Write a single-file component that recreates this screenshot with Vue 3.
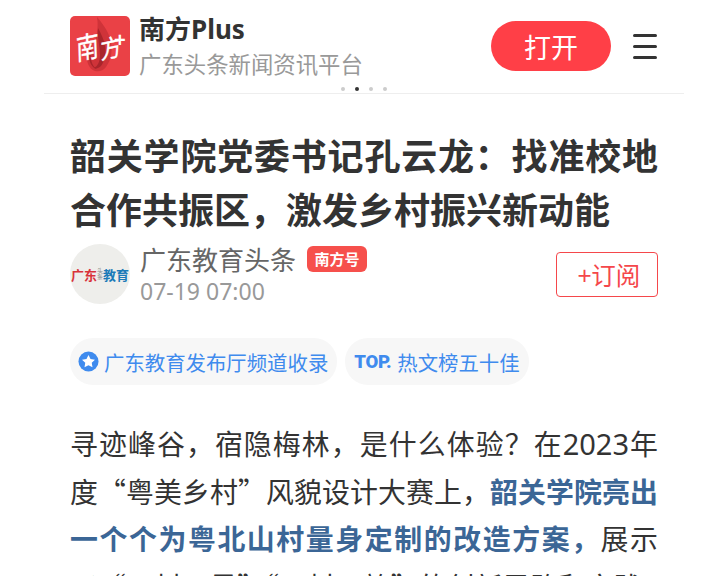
<template>
  <div class="page">
    <header class="topbar">
      <div class="brand">
        <div class="logo">
          <svg class="flame" viewBox="0 0 60 60" aria-hidden="true">
            <path d="M27 1c5 6 10 12 13 21 3 10 2 21-4 29-3 4-7 5-11 4-6-2-9-9-8-17 1-5 2-9 4-13 0 3 1 5 2 7 3-9 6-20 4-31z" fill="#cf3339" />
            <path d="M28 12c3 6 6 11 7 18 1 7 0 15-4 20-2 2-5 3-7 2 4-2 6-7 6-13 0-9-3-18-2-27z" fill="#a9252b" />
            <path d="M22 30c-2 5-2 12 0 17 1 3 3 5 5 6-5-1-8-7-8-13 0-4 1-7 3-10z" fill="#a9252b" />
          </svg>
          <span class="logo-nan">南</span>
          <span class="logo-fang">方</span>
          <span class="logo-plus">+</span>
        </div>
        <div class="brand-text">
          <div class="brand-name">南方Plus</div>
          <div class="brand-sub">广东头条新闻资讯平台</div>
        </div>
      </div>
      <div class="actions">
        <button class="open-btn">打开</button>
        <div class="menu"><i></i><i></i><i></i></div>
      </div>
      <div class="dots">
        <span v-for="n in 4" :key="n" class="dot" :class="{ on: n === 2 }"></span>
      </div>
    </header>

    <main class="article">
      <h1 class="title">韶关学院党委书记孔云龙：找准校地合作共振区，激发乡村振兴新动能</h1>

      <div class="author">
        <div class="avatar">
          <span class="av-red">广东</span><span class="av-mid">头条</span><span class="av-blue">教育</span>
        </div>
        <div class="author-info">
          <div class="author-line">
            <span class="author-name">广东教育头条</span>
            <span class="badge">南方号</span>
          </div>
          <div class="date">07-19 07:00</div>
        </div>
        <button class="follow">+订阅</button>
      </div>

      <div class="tags">
        <div class="tag">
          <svg class="star" viewBox="0 0 22 22" aria-hidden="true">
            <circle cx="11" cy="11" r="10.5" fill="#3f8bee" />
            <path d="M11 4.2l2.1 4.3 4.7.6-3.4 3.3.8 4.7-4.2-2.3-4.2 2.3.8-4.7-3.4-3.3 4.7-.6z" fill="#fff" />
          </svg>
          <span>广东教育发布厅频道收录</span>
        </div>
        <div class="tag tag-top">
          <b class="top">TOP.</b>
          <span>热文榜五十佳</span>
        </div>
      </div>

      <p class="body">寻迹峰谷，宿隐梅林，是什么体验？在<span class="num">2023</span>年度“粤美乡村”风貌设计大赛上，<strong>韶关学院亮出一个个为粤北山村量身定制的改造方案，</strong>展示了“一村一景”“一村一韵”的创新思路和实践</p>
    </main>
  </div>
</template>

<script setup>
</script>

<style>
html, body {
  margin: 0;
  background: #fff;
  overflow: hidden;
}
</style>

<style scoped>
.page {
  width: 640px;
  margin-left: 44px;
  height: 576px;
  overflow: hidden;
  font-family: "Noto Sans CJK SC", "Noto Sans", sans-serif;
  color: #333;
}

.topbar {
  position: relative;
  height: 94px;
  padding: 16px 27px 0 26px;
  box-sizing: border-box;
  display: flex;
  justify-content: space-between;
  align-items: flex-start;
  border-bottom: 1px solid #eee;
}

.brand {
  display: flex;
  gap: 9px;
}

.logo {
  position: relative;
  width: 60px;
  height: 60px;
  border-radius: 5px;
  background: #ea4146;
  overflow: hidden;
}

.flame {
  position: absolute;
  inset: 0;
}

.logo-nan,
.logo-fang,
.logo-plus {
  position: absolute;
  color: #fff;
  line-height: 1;
}

.logo-nan {
  left: 3px;
  top: 15px;
  font-size: 29px;
  -webkit-text-stroke: 0.4px #fff;
  transform: rotate(-12deg) skewX(-10deg) scaleX(0.8);
}

.logo-fang {
  left: 29px;
  top: 19px;
  font-size: 24px;
  -webkit-text-stroke: 0.4px #fff;
  transform: rotate(-12deg) skewX(-10deg) scaleX(0.9);
}

.logo-plus {
  left: 44px;
  top: 14px;
  font-family: "Liberation Sans", sans-serif;
  font-size: 20px;
  font-weight: 700;
}

.brand-text {
  margin-top: -4px;
}

.brand-name {
  font-family: "Noto Sans", "Noto Sans CJK SC", sans-serif;
  font-size: 26px;
  font-weight: 700;
  line-height: 34px;
  color: #333;
}

.brand-sub {
  font-size: 22.4px;
  line-height: 34px;
  color: #999;
}

.actions {
  display: flex;
  align-items: center;
  gap: 22px;
  margin-top: 5px;
}

.open-btn {
  width: 120px;
  height: 50px;
  border: 0;
  border-radius: 25px;
  background: #ff3f47;
  color: #fff;
  font-family: inherit;
  font-size: 27px;
  padding: 0;
}

.menu {
  width: 24px;
  display: flex;
  flex-direction: column;
  gap: 8px;
}

.menu i {
  display: block;
  height: 3px;
  border-radius: 2px;
  background: #333;
}

.dots {
  position: absolute;
  left: 297px;
  bottom: 2px;
  display: flex;
  gap: 10px;
}

.dot {
  width: 4px;
  height: 4px;
  border-radius: 50%;
  background: #ccc;
}

.dot.on {
  background: #333;
}

.article {
  padding: 0 26px;
}

.title {
  margin: 33px 0 0;
  font-size: 36px;
  font-weight: 700;
  line-height: 54px;
  text-align: justify;
  color: #333;
}

.author {
  display: flex;
  align-items: center;
  margin-top: 7px;
}

.avatar {
  width: 60px;
  height: 60px;
  border-radius: 50%;
  background: #eeeeeb;
  display: flex;
  align-items: center;
  justify-content: center;
  flex: none;
  white-space: nowrap;
}

.av-red {
  font-size: 13px;
  font-weight: 700;
  color: #d9323a;
}

.av-mid {
  width: 6px;
  font-size: 6px;
  line-height: 6px;
  white-space: normal;
  color: #888;
}

.av-blue {
  font-size: 13px;
  font-weight: 700;
  color: #1b7ab8;
}

.author-info {
  margin-left: 10px;
  flex: 1;
}

.author-line {
  display: flex;
  align-items: center;
  gap: 11px;
}

.author-name {
  font-size: 26px;
  line-height: 34px;
  color: #666;
}

.badge {
  width: 60px;
  height: 26px;
  border-radius: 6px;
  background: #f6504c;
  color: #fff;
  font-size: 15px;
  font-weight: 700;
  line-height: 26px;
  text-align: center;
}

.date {
  font-family: "Noto Sans", sans-serif;
  font-size: 23px;
  line-height: 30px;
  color: #999;
}

.follow {
  width: 102px;
  height: 45px;
  border: 1px solid #f5474b;
  border-radius: 4px;
  background: #fff;
  color: #f5474b;
  font-family: inherit;
  font-size: 24.5px;
  padding: 0 0 0 4px;
}

.tags {
  display: flex;
  gap: 8px;
  margin-top: 32px;
}

.tag {
  display: flex;
  align-items: center;
  gap: 5px;
  height: 47px;
  padding: 0 9px 0 8px;
  border-radius: 23px;
  background: #f7f7f7;
  color: #3f8bee;
  font-size: 20.4px;
  white-space: nowrap;
}

.tag-top {
  gap: 6px;
  padding-left: 9px;
}

.star {
  width: 21px;
  height: 21px;
}

.top {
  font-family: Roboto, sans-serif;
  font-size: 18.5px;
  font-weight: 900;
  letter-spacing: -0.3px;
}

.body {
  margin: 35px 0 0;
  font-size: 27.9px;
  line-height: 47.6px;
  text-align: justify;
  color: #333;
}

.num {
  font-family: "Noto Sans", sans-serif;
  font-size: 29px;
  line-height: 1;
}

.body strong {
  color: #3b6696;
  font-weight: 700;
}
</style>
